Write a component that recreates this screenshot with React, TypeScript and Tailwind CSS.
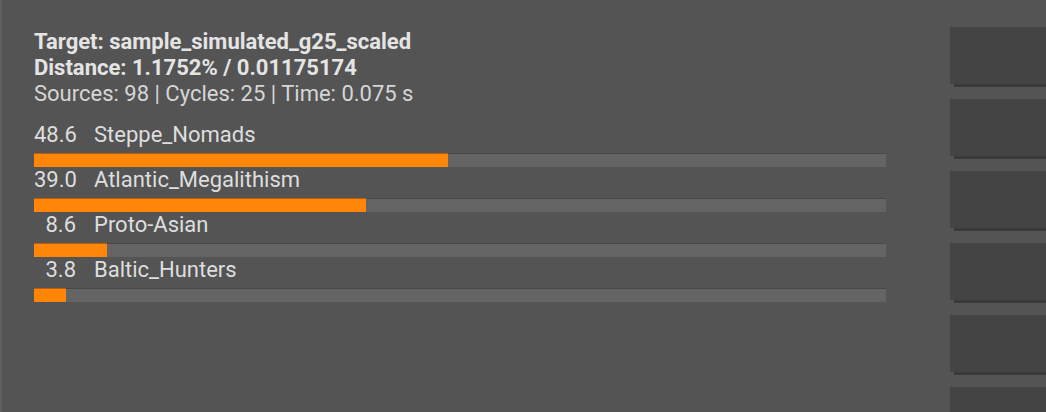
const ROWS = [
  { pct: 48.6, name: "Steppe_Nomads" },
  { pct: 39.0, name: "Atlantic_Megalithism" },
  { pct: 8.6, name: "Proto-Asian" },
  { pct: 3.8, name: "Baltic_Hunters" },
];

function ResultRow({ pct, name }: { pct: number; name: string }) {
  return (
    <div className="flex flex-col">
      <div className="flex text-[22px] leading-[26px] text-[#dedede]">
        <span className="w-[42px] text-right">{pct.toFixed(1)}</span>
        <span className="ml-[18px]">{name}</span>
      </div>
      <div className="mt-[5px] h-[14px] w-[852px] bg-[#646464] shadow-[inset_0_1px_0_#484848]">
        <div
          className="h-full bg-[#ff8608] shadow-[inset_0_1px_0_#b86010]"
          style={{ width: `${pct}%` }}
        />
      </div>
    </div>
  );
}

export default function App() {
  return (
    <div
      className="flex h-[412px] w-full overflow-hidden border-l-2 border-[#5e5e5e] bg-[#545454]"
      style={{ fontFamily: "Roboto, 'Liberation Sans', sans-serif" }}
    >
      <div className="flex-1 pl-[32px] pt-[29px]">
        <div className="text-[22px] font-bold leading-[26px] text-[#e4e4e4]">
          Target: sample_simulated_g25_scaled
        </div>
        <div className="text-[22px] font-bold leading-[26px] text-[#e4e4e4]">
          Distance: 1.1752% / 0.01175174
        </div>
        <div className="text-[22px] leading-[26px] text-[#d6d6d6]">
          Sources: 98 | Cycles: 25 | Time: 0.075 s
        </div>
        <div className="mt-[15px] flex flex-col">
          {ROWS.map((r) => (
            <ResultRow key={r.name} pct={r.pct} name={r.name} />
          ))}
        </div>
      </div>
      <div className="flex w-[96px] shrink-0 flex-col gap-[15px] pt-[27px]">
        {[0, 1, 2, 3, 4, 5].map((i) => (
          <div key={i} className="relative h-[57px] shrink-0 bg-[#444444]">
            <div className="absolute -bottom-[3px] left-[4px] right-0 h-[3px] bg-[#3a3a3a]" />
          </div>
        ))}
      </div>
    </div>
  );
}
